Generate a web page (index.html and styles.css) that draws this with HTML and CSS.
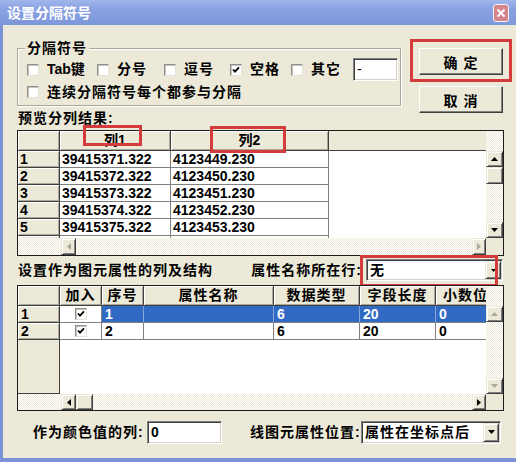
FILE: index.html
```html
<!DOCTYPE html>
<html>
<head>
<meta charset="utf-8">
<title>设置分隔符号</title>
<link rel="stylesheet" href="styles.css">
</head>
<body>
<div class="window">
  <div class="titlebar">
    <span class="title">设置分隔符号</span>
    <span class="close"><svg width="10" height="10" viewBox="0 0 10 10"><path d="M1.5 1.5L8.5 8.5M8.5 1.5L1.5 8.5" stroke="#fff" stroke-width="2"/></svg></span>
  </div>
  <div class="client">
    <div class="toprow">
      <div class="group">
        <div class="group-title cjk">分隔符号</div>
        <div class="opts">
          <div class="opt"><span class="cb"></span><span>Tab键</span></div>
          <div class="opt"><span class="cb"></span><span class="cjk">分号</span></div>
          <div class="opt"><span class="cb"></span><span class="cjk">逗号</span></div>
          <div class="opt"><span class="cb"><svg width="8" height="8" viewBox="0 0 8 8"><path d="M1 3.5L3 5.6L7 1.4" fill="none" stroke="#000" stroke-width="1.8"/></svg></span><span class="cjk">空格</span></div>
          <div class="opt"><span class="cb"></span><span class="cjk">其它</span></div>
          <div class="edit sep">-</div>
        </div>
        <div class="opt row2"><span class="cb"></span><span class="cjk">连续分隔符号每个都参与分隔</span></div>
      </div>
      <div class="btns">
        <div class="btn cjk">确 定<span class="mark mark-ok"></span></div>
        <div class="btn cjk">取 消</div>
      </div>
    </div>

    <div class="caption cjk">预览分列结果:</div>

    <div class="grid g1">
      <div class="main">
        <div class="r h"><div class="c rh"></div><div class="c hd">列1</div><div class="c hd">列2</div><div class="c hf"></div></div>
        <div class="r"><div class="c rh">1</div><div class="c">39415371.322</div><div class="c">4123449.230</div><div class="c f"></div></div>
        <div class="r"><div class="c rh">2</div><div class="c">39415372.322</div><div class="c">4123450.230</div><div class="c f"></div></div>
        <div class="r"><div class="c rh">3</div><div class="c">39415373.322</div><div class="c">4123451.230</div><div class="c f"></div></div>
        <div class="r"><div class="c rh">4</div><div class="c">39415374.322</div><div class="c">4123452.230</div><div class="c f"></div></div>
        <div class="r"><div class="c rh">5</div><div class="c">39415375.322</div><div class="c">4123453.230</div><div class="c f"></div></div>
        <div class="r"><div class="c rh"></div><div class="c"></div><div class="c"></div><div class="c f"></div></div>
      </div>
      <div class="vs">
        <div class="vs-top"></div>
        <div class="sb"><svg width="7" height="4" viewBox="0 0 7 4"><polygon points="0,4 3.5,0 7,4" fill="#000"/></svg></div>
        <div class="thumb"></div>
        <div class="track"></div>
        <div class="sb"><svg width="7" height="4" viewBox="0 0 7 4"><polygon points="0,0 7,0 3.5,4" fill="#000"/></svg></div>
      </div>
      <div class="hs">
        <div class="hs-lead"></div>
        <div class="sb hb"><svg width="4" height="7" viewBox="0 0 4 7"><polygon points="4,0 4,7 0,3.5" fill="#aca899"/></svg></div>
        <div class="track"></div>
        <div class="sb hb rb"><svg width="4" height="7" viewBox="0 0 4 7"><polygon points="0,0 0,7 4,3.5" fill="#aca899"/></svg></div>
      </div>
      <div class="corner"></div>
      <span class="mark mark-c1"></span>
      <span class="mark mark-c2"></span>
    </div>

    <div class="attrrow">
      <span class="lbl1 cjk">设置作为图元属性的列及结构</span>
      <span class="lbl2 cjk">属性名称所在行:</span>
      <div class="combo name">
        <span class="combo-text cjk">无</span>
        <span class="combo-btn"><svg width="5" height="3" viewBox="0 0 5 3"><polygon points="0,0 5,0 2.5,3" fill="#000"/></svg></span>
        <span class="mark mark-name"></span>
      </div>
    </div>

    <div class="grid g2">
      <div class="main">
        <div class="r h"><div class="c rh"></div><div class="c hd cjk">加入</div><div class="c hd cjk">序号</div><div class="c hd cjk">属性名称</div><div class="c hd cjk">数据类型</div><div class="c hd cjk">字段长度</div><div class="c hd cjk">小数位</div><div class="c hf"></div></div>
        <div class="r sel"><div class="c rh">1</div><div class="c chk"><span class="cb"><svg width="8" height="8" viewBox="0 0 8 8"><path d="M1 3.5L3 5.6L7 1.4" fill="none" stroke="#000" stroke-width="1.8"/></svg></span></div><div class="c s">1</div><div class="c s"></div><div class="c s">6</div><div class="c s">20</div><div class="c s">0</div><div class="c f"></div></div>
        <div class="r"><div class="c rh">2</div><div class="c chk"><span class="cb"><svg width="8" height="8" viewBox="0 0 8 8"><path d="M1 3.5L3 5.6L7 1.4" fill="none" stroke="#000" stroke-width="1.8"/></svg></span></div><div class="c">2</div><div class="c"></div><div class="c">6</div><div class="c">20</div><div class="c">0</div><div class="c f"></div></div>
        <div class="fillrow"><div class="rh-fill"></div><div class="white-fill"></div></div>
      </div>
      <div class="vs">
        <div class="vs-top"></div>
        <div class="sb"><svg width="7" height="4" viewBox="0 0 7 4"><polygon points="0,4 3.5,0 7,4" fill="#aca899"/></svg></div>
        <div class="track"></div>
        <div class="sb"><svg width="7" height="4" viewBox="0 0 7 4"><polygon points="0,0 7,0 3.5,4" fill="#aca899"/></svg></div>
      </div>
      <div class="hs">
        <div class="hs-lead"></div>
        <div class="sb hb"><svg width="4" height="7" viewBox="0 0 4 7"><polygon points="4,0 4,7 0,3.5" fill="#000"/></svg></div>
        <div class="sb hb thumbh"></div>
        <div class="track"></div>
        <div class="sb hb rb"><svg width="4" height="7" viewBox="0 0 4 7"><polygon points="0,0 0,7 4,3.5" fill="#000"/></svg></div>
      </div>
      <div class="corner"></div>
    </div>

    <div class="bottomrow">
      <span class="lbl-color cjk">作为颜色值的列:</span>
      <div class="edit val">0</div>
      <span class="lbl-pos cjk">线图元属性位置:</span>
      <div class="combo pos">
        <span class="combo-text cjk">属性在坐标点后</span>
        <span class="combo-btn"><svg width="7" height="4" viewBox="0 0 7 4"><polygon points="0,0 7,0 3.5,4" fill="#000"/></svg></span>
      </div>
    </div>
  </div>
</div>
</body>
</html>
```

FILE: styles.css
```css
* { box-sizing: border-box; }
html, body { margin: 0; padding: 0; }
body {
  width: 516px;
  height: 462px;
  overflow: hidden;
  background: #ece9d8;
  font-family: "Liberation Sans", "Noto Sans CJK SC", sans-serif;
  font-weight: bold;
  font-size: 14px;
  color: #000;
}
.cjk { letter-spacing: 1px; }

.window {
  width: 516px;
  height: 462px;
  display: flex;
  flex-direction: column;
}

/* title bar */
.titlebar {
  flex: none;
  height: 25px;
  display: flex;
  align-items: center;
  justify-content: space-between;
  padding: 0 7px 0 7px;
  background: linear-gradient(#a1b6ec, #8aa2e2 35%, #7d97dc);
  color: #fff;
}
.title { line-height: 16px; }
.close {
  width: 16px;
  height: 18px;
  margin-top: 1px;
  border: 1px solid #f4f4f4;
  border-radius: 3px;
  background: #d4848a;
  display: flex;
  align-items: center;
  justify-content: center;
}

/* client area */
.client {
  flex: 1;
  border-left: 3px solid #7b92d8;
  border-bottom: 4px solid #7b92d8;
  padding: 23px 12px 0 14px;
  display: flex;
  flex-direction: column;
}

.toprow { display: flex; align-items: flex-start; flex: none; }

.group {
  width: 384px;
  height: 58px;
  border: 1px solid #aca899;
  box-shadow: inset 1px 1px 0 #fff, 1px 1px 0 #fff;
  padding-left: 9px;
}
.group-title {
  display: table;
  margin: -9px 0 0 -2px;
  padding: 0 2px;
  background: #ece9d8;
  line-height: 17px;
}
.opts {
  display: grid;
  grid-template-columns: 70px 67px 66px 61px 62px 45px;
  height: 23px;
  align-items: center;
  margin-top: 1px;
}
.opt {
  display: flex;
  align-items: center;
  gap: 8px;
  line-height: 17px;
  white-space: nowrap;
}
.row2 { margin-top: 2px; height: 18px; }

.cb {
  width: 12px;
  height: 12px;
  flex: none;
  background: #fff;
  border: 1px solid;
  border-color: #8e8e8e #e4e2d6 #e4e2d6 #8e8e8e;
  box-shadow: inset 1px 1px 0 #c8c6bc;
  display: flex;
  align-items: center;
  justify-content: center;
}

.edit {
  height: 23px;
  background: #fff;
  border: 1px solid;
  border-color: #808080 #fff #fff #808080;
  box-shadow: inset 1px 1px 0 #404040, inset -1px -1px 0 #d4d0c8;
  padding: 0 3px;
  line-height: 21px;
  white-space: nowrap;
}
.edit.sep { font-weight: normal; }

.btns {
  width: 84px;
  margin-left: 18px;
  display: flex;
  flex-direction: column;
  gap: 11px;
}
.btn {
  position: relative;
  height: 27px;
  background: #ece9d8;
  border: 1px solid;
  border-color: #fff #404040 #404040 #fff;
  box-shadow: inset -1px -1px 0 #808080;
  display: flex;
  align-items: center;
  justify-content: center;
  white-space: pre;
}

/* red annotation frames */
.mark {
  position: absolute;
  border: 3px solid #d43c3c;
  pointer-events: none;
}
.mark-ok { left: -10px; top: -10px; width: 102px; height: 43px; }
.mark-c1 { left: 65px; top: -6px; width: 59px; height: 21px; }
.mark-c2 { left: 192px; top: -5px; width: 76px; height: 27px; }
.mark-name { left: -7px; top: -5px; width: 138px; height: 32px; }

.caption {
  flex: none;
  margin: -3px 0 0 1px;
  line-height: 16px;
}

/* grids */
.grid {
  flex: none;
  position: relative;
  width: 487px;
  height: 126px;
  border: 1px solid #1c1c1c;
  display: grid;
  grid-template-columns: 1fr 17px;
  grid-template-rows: 1fr 17px;
  background: #fff;
}
.g1 { margin-top: 4px; }
.g2 { margin-top: 4px; grid-template-rows: 1fr 16px; }

.main {
  overflow: hidden;
  display: flex;
  flex-direction: column;
  min-width: 0;
  min-height: 0;
}
.r { flex: none; display: grid; height: 17px; }
.r.h { height: 20px; }
.g1 .r { grid-template-columns: 42px 111px 158px 1fr; }
.g2 .r { grid-template-columns: 42px 42px 42px 130px 86px 76px 60px 1fr; }

.c {
  background: #fff;
  border-right: 1px solid #808080;
  border-bottom: 1px solid #808080;
  padding-left: 2px;
  line-height: 16px;
  white-space: nowrap;
  overflow: hidden;
}
.c.rh {
  background: #ece9d8;
  border-color: #404040;
  box-shadow: inset 1px 1px 0 #fff, inset -1px -1px 0 #aca899;
}
.c.hd {
  background: #ece9d8;
  border-color: #404040;
  box-shadow: inset 1px 1px 0 #fff, inset -1px -1px 0 #aca899;
  text-align: center;
  padding: 0;
  line-height: 19px;
}
.c.hf {
  background: #ece9d8;
  border-right: none;
  border-bottom: 1px solid #404040;
}
.c.f { border: none; }
.g2 .c { padding-left: 3px; }
.g2 .c.hd { padding: 0; }
.c.chk {
  display: flex;
  align-items: center;
  justify-content: center;
  padding: 0;
}
.c.s {
  background: #316ac5;
  color: #fff;
  border-right-color: #8da6d6;
}

.fillrow {
  flex: 1;
  display: grid;
  grid-template-columns: 42px 1fr;
}
.rh-fill {
  background: #ece9d8;
  border-right: 1px solid #404040;
  border-bottom: 1px solid #404040;
}
.white-fill { background: #fff; }

/* scrollbars */
.vs, .hs, .track, .vs-top, .hs-lead {
  background-color: #ece9d8;
  background-image: repeating-conic-gradient(#fff 0% 25%, #ece9d8 0% 50%);
  background-size: 2px 2px;
}
.vs { display: flex; flex-direction: column; min-height: 0; }
.vs-top { flex: none; height: 20px; }
.track { flex: 1; }
.hs { display: flex; min-width: 0; }
.hs-lead { flex: none; width: 43px; }
.sb, .thumb {
  flex: none;
  height: 16px;
  background: #ece9d8;
  border: 1px solid;
  border-color: #ece9d8 #404040 #404040 #ece9d8;
  box-shadow: inset 1px 1px 0 #fff, inset -1px -1px 0 #808080;
  display: flex;
  align-items: center;
  justify-content: center;
}
.thumb { height: 17px; }
.sb.hb { width: 15px; height: auto; }
.sb.rb { width: 14px; }
.sb.thumbh { width: 17px; }
.corner { background: #ece9d8; }

/* attribute header row */
.attrrow {
  flex: none;
  display: flex;
  align-items: center;
  height: 22px;
  margin-top: 3px;
}
.lbl1 { margin-left: 1px; line-height: 16px; }
.lbl2 { margin-left: auto; line-height: 16px; }

.combo {
  position: relative;
  height: 22px;
  display: flex;
  background: #fff;
  border: 1px solid;
  border-color: #808080 #fff #fff #808080;
  box-shadow: inset 1px 1px 0 #404040, inset -1px -1px 0 #d4d0c8;
  padding: 1px;
}
.combo.name { width: 137px; margin: 0 1px 0 4px; }
.combo-text {
  flex: 1;
  padding-left: 2px;
  line-height: 19px;
  white-space: nowrap;
  overflow: hidden;
}
.combo-btn {
  flex: none;
  width: 16px;
  background: #ece9d8;
  border: 1px solid;
  border-color: #ece9d8 #404040 #404040 #ece9d8;
  box-shadow: inset 1px 1px 0 #fff, inset -1px -1px 0 #808080;
  display: flex;
  align-items: center;
  justify-content: center;
}

/* bottom row */
.bottomrow {
  flex: none;
  display: flex;
  align-items: center;
  height: 24px;
  margin-top: 9px;
  padding-left: 16px;
}
.lbl-color { width: 111px; line-height: 16px; white-space: nowrap; }
.edit.val { width: 75px; margin-left: 3px; }
.lbl-pos { width: 111px; margin-left: 28px; line-height: 16px; white-space: nowrap; }
.combo.pos { width: 140px; height: 23px; }
```
